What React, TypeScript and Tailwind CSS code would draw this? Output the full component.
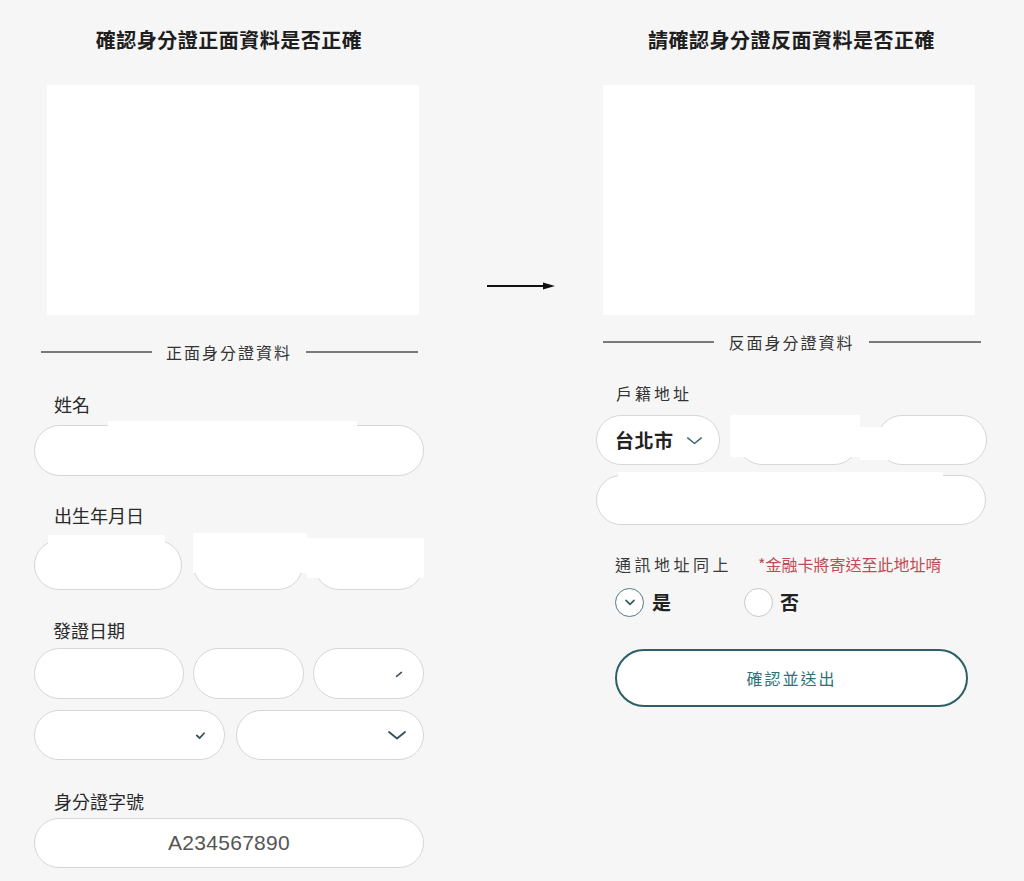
import React from "react";

const FONT = { fontFamily: '"Noto Sans CJK TC", "Noto Sans", sans-serif' };

function Chevron({ className = "" }: { className?: string }) {
  return (
    <svg viewBox="0 0 20 10" className={className} fill="none" stroke="currentColor" strokeWidth="1.8" strokeLinecap="round" strokeLinejoin="round">
      <polyline points="2,2 10,8.5 18,2" />
    </svg>
  );
}

function Pill({ className = "", children }: { className?: string; children?: React.ReactNode }) {
  return (
    <div className={`rounded-full border-[1.5px] border-[#d6d6d6] bg-white flex items-center ${className}`}>
      {children}
    </div>
  );
}

function Divider({ text }: { text: string }) {
  return (
    <div className="flex items-center h-[20px]">
      <div className="ml-[7px] w-[111px] h-[1.5px] bg-[#7a7a7a]" />
      <div className="flex-1 text-center text-[16px] leading-[20px] tracking-[2px] text-[#333]">{text}</div>
      <div className="mr-[6px] w-[112px] h-[1.5px] bg-[#7a7a7a]" />
    </div>
  );
}

export default function App() {
  return (
    <div style={FONT} className="relative w-[1024px] h-[881px] bg-[#f6f6f6] flex overflow-hidden">
      {/* Left column */}
      <div className="ml-[34px] w-[390px] flex flex-col">
        <div className="mt-[26px] h-[28px] leading-[28px] text-center text-[20px] font-bold tracking-[0.5px] text-[#1e1e1e]">
          確認身分證正面資料是否正確
        </div>
        <div className="mt-[31px] ml-[13px] w-[372px] h-[230px] bg-white" />
        <div className="mt-[27px]">
          <Divider text="正面身分證資料" />
        </div>
        <div className="mt-[30px] pl-[20px] h-[24px] leading-[24px] text-[18px] text-[#2a2a2a]">姓名</div>
        <Pill className="mt-[9px] h-[51px] w-full" />
        <div className="mt-[27px] pl-[20px] h-[24px] leading-[24px] text-[18px] text-[#2a2a2a]">出生年月日</div>
        <div className="mt-[13px] flex gap-[11px]">
          <Pill className="h-[50px] w-[148px]" />
          <Pill className="h-[50px] w-[110px]" />
          <Pill className="h-[50px] w-[110px]" />
        </div>
        <div className="mt-[28px] pl-[19px] h-[24px] leading-[24px] text-[18px] text-[#2a2a2a]">發證日期</div>
        <div className="mt-[6px] flex gap-[9px]">
          <Pill className="h-[51px] w-[150px]" />
          <Pill className="h-[51px] w-[111px]" />
          <Pill className="h-[51px] w-[111px] justify-end pr-[20px]">
            <svg viewBox="0 0 10 10" className="w-[8px] h-[8px] text-[#3c5458]" stroke="currentColor" strokeWidth="2" strokeLinecap="round">
              <line x1="2" y1="8" x2="8" y2="3" />
            </svg>
          </Pill>
        </div>
        <div className="mt-[11px] flex gap-[11px]">
          <Pill className="h-[50px] flex-1 justify-end pr-[18px]">
            <svg viewBox="0 0 12 10" className="w-[11px] h-[9px] text-[#3c5458]" fill="none" stroke="currentColor" strokeWidth="2" strokeLinecap="round" strokeLinejoin="round">
              <polyline points="2,5 5,8 10,2.5" />
            </svg>
          </Pill>
          <Pill className="h-[50px] flex-1 justify-end pr-[16px]">
            <Chevron className="w-[20px] h-[10px] text-[#2f5257]" />
          </Pill>
        </div>
        <div className="mt-[29px] pl-[20px] h-[24px] leading-[24px] text-[18px] text-[#2a2a2a]">身分證字號</div>
        <Pill className="mt-[5px] h-[50px] w-full justify-center">
          <span className="text-[21px] text-[#555] tracking-[0.3px]" style={{ fontFamily: '"Liberation Sans", Arial, sans-serif' }}>
            A234567890
          </span>
        </Pill>
      </div>

      {/* Arrow */}
      <div className="w-[172px] pt-[281px] pl-[63px]">
        <svg width="70" height="10" viewBox="0 0 70 10">
          <line x1="0" y1="5" x2="60" y2="5" stroke="#111" strokeWidth="2" />
          <polygon points="56,1.5 68,5 56,8.5" fill="#111" />
        </svg>
      </div>

      {/* Right column */}
      <div className="w-[391px] flex flex-col">
        <div className="mt-[26px] h-[28px] leading-[28px] text-center text-[20px] font-bold tracking-[0.5px] text-[#1e1e1e]">
          請確認身分證反面資料是否正確
        </div>
        <div className="mt-[31px] ml-[7px] w-[372px] h-[230px] bg-white" />
        <div className="mt-[17px]">
          <Divider text="反面身分證資料" />
        </div>
        <div className="mt-[29px] pl-[20px] h-[24px] leading-[24px] text-[16px] tracking-[3px] text-[#333]">戶籍地址</div>
        <div className="mt-[10px] flex">
          <Pill className="h-[50px] w-[124px] pl-[18px] gap-[12px]">
            <span className="text-[19px] font-bold text-[#222] tracking-[0.5px]">台北市</span>
            <Chevron className="w-[17px] h-[9px] text-[#3a6a70]" />
          </Pill>
          <Pill className="ml-[17px] h-[50px] w-[122px]" />
          <Pill className="ml-[18px] h-[50px] w-[110px]" />
        </div>
        <Pill className="mt-[10px] h-[50px] w-[390px]" />
        <div className="mt-[27px] pl-[19px] h-[24px] leading-[24px] text-[16px] whitespace-nowrap">
          <span className="text-[#3a3a3a] tracking-[3.5px]">通訊地址同上</span>
          <span className="ml-[26px] text-[#c24a52]">*金融卡將寄送至此地址唷</span>
        </div>
        <div className="mt-[11px] pl-[19px] h-[30px] flex items-center">
          <div className="w-[29px] h-[29px] rounded-full border-[1.5px] border-[#4d7d83] bg-white flex items-center justify-center">
            <svg viewBox="0 0 14 10" className="w-[12px] h-[8px] text-[#2f5a60]" fill="none" stroke="currentColor" strokeWidth="2" strokeLinecap="round" strokeLinejoin="round">
              <polyline points="2,3 7,8 12,3" />
            </svg>
          </div>
          <span className="ml-[8px] text-[19px] font-bold text-[#222]">是</span>
          <div className="ml-[73px] w-[29px] h-[29px] rounded-full border-[1.5px] border-[#c8c8c8] bg-white" />
          <span className="ml-[7px] text-[19px] font-bold text-[#222]">否</span>
        </div>
        <button className="mt-[32px] ml-[19px] w-[353px] h-[58px] rounded-full border-[2.5px] border-[#2c5f66] bg-white text-[16px] tracking-[2px] text-[#2f7078]">
          確認並送出
        </button>
      </div>

      {/* Redaction overlays */}
      <div className="absolute left-[108px] top-[421px] w-[249px] h-[46px] bg-white" />
      <div className="absolute left-[48px] top-[535px] w-[117px] h-[40px] bg-white" />
      <div className="absolute left-[193px] top-[533px] w-[114px] h-[40px] bg-white" />
      <div className="absolute left-[307px] top-[538px] w-[117px] h-[40px] bg-white" />
      <div className="absolute left-[730px] top-[415px] w-[130px] h-[42px] bg-white" />
      <div className="absolute left-[860px] top-[427px] w-[73px] h-[33px] bg-white" />
      <div className="absolute left-[618px] top-[472px] w-[325px] h-[40px] bg-white" />
    </div>
  );
}
